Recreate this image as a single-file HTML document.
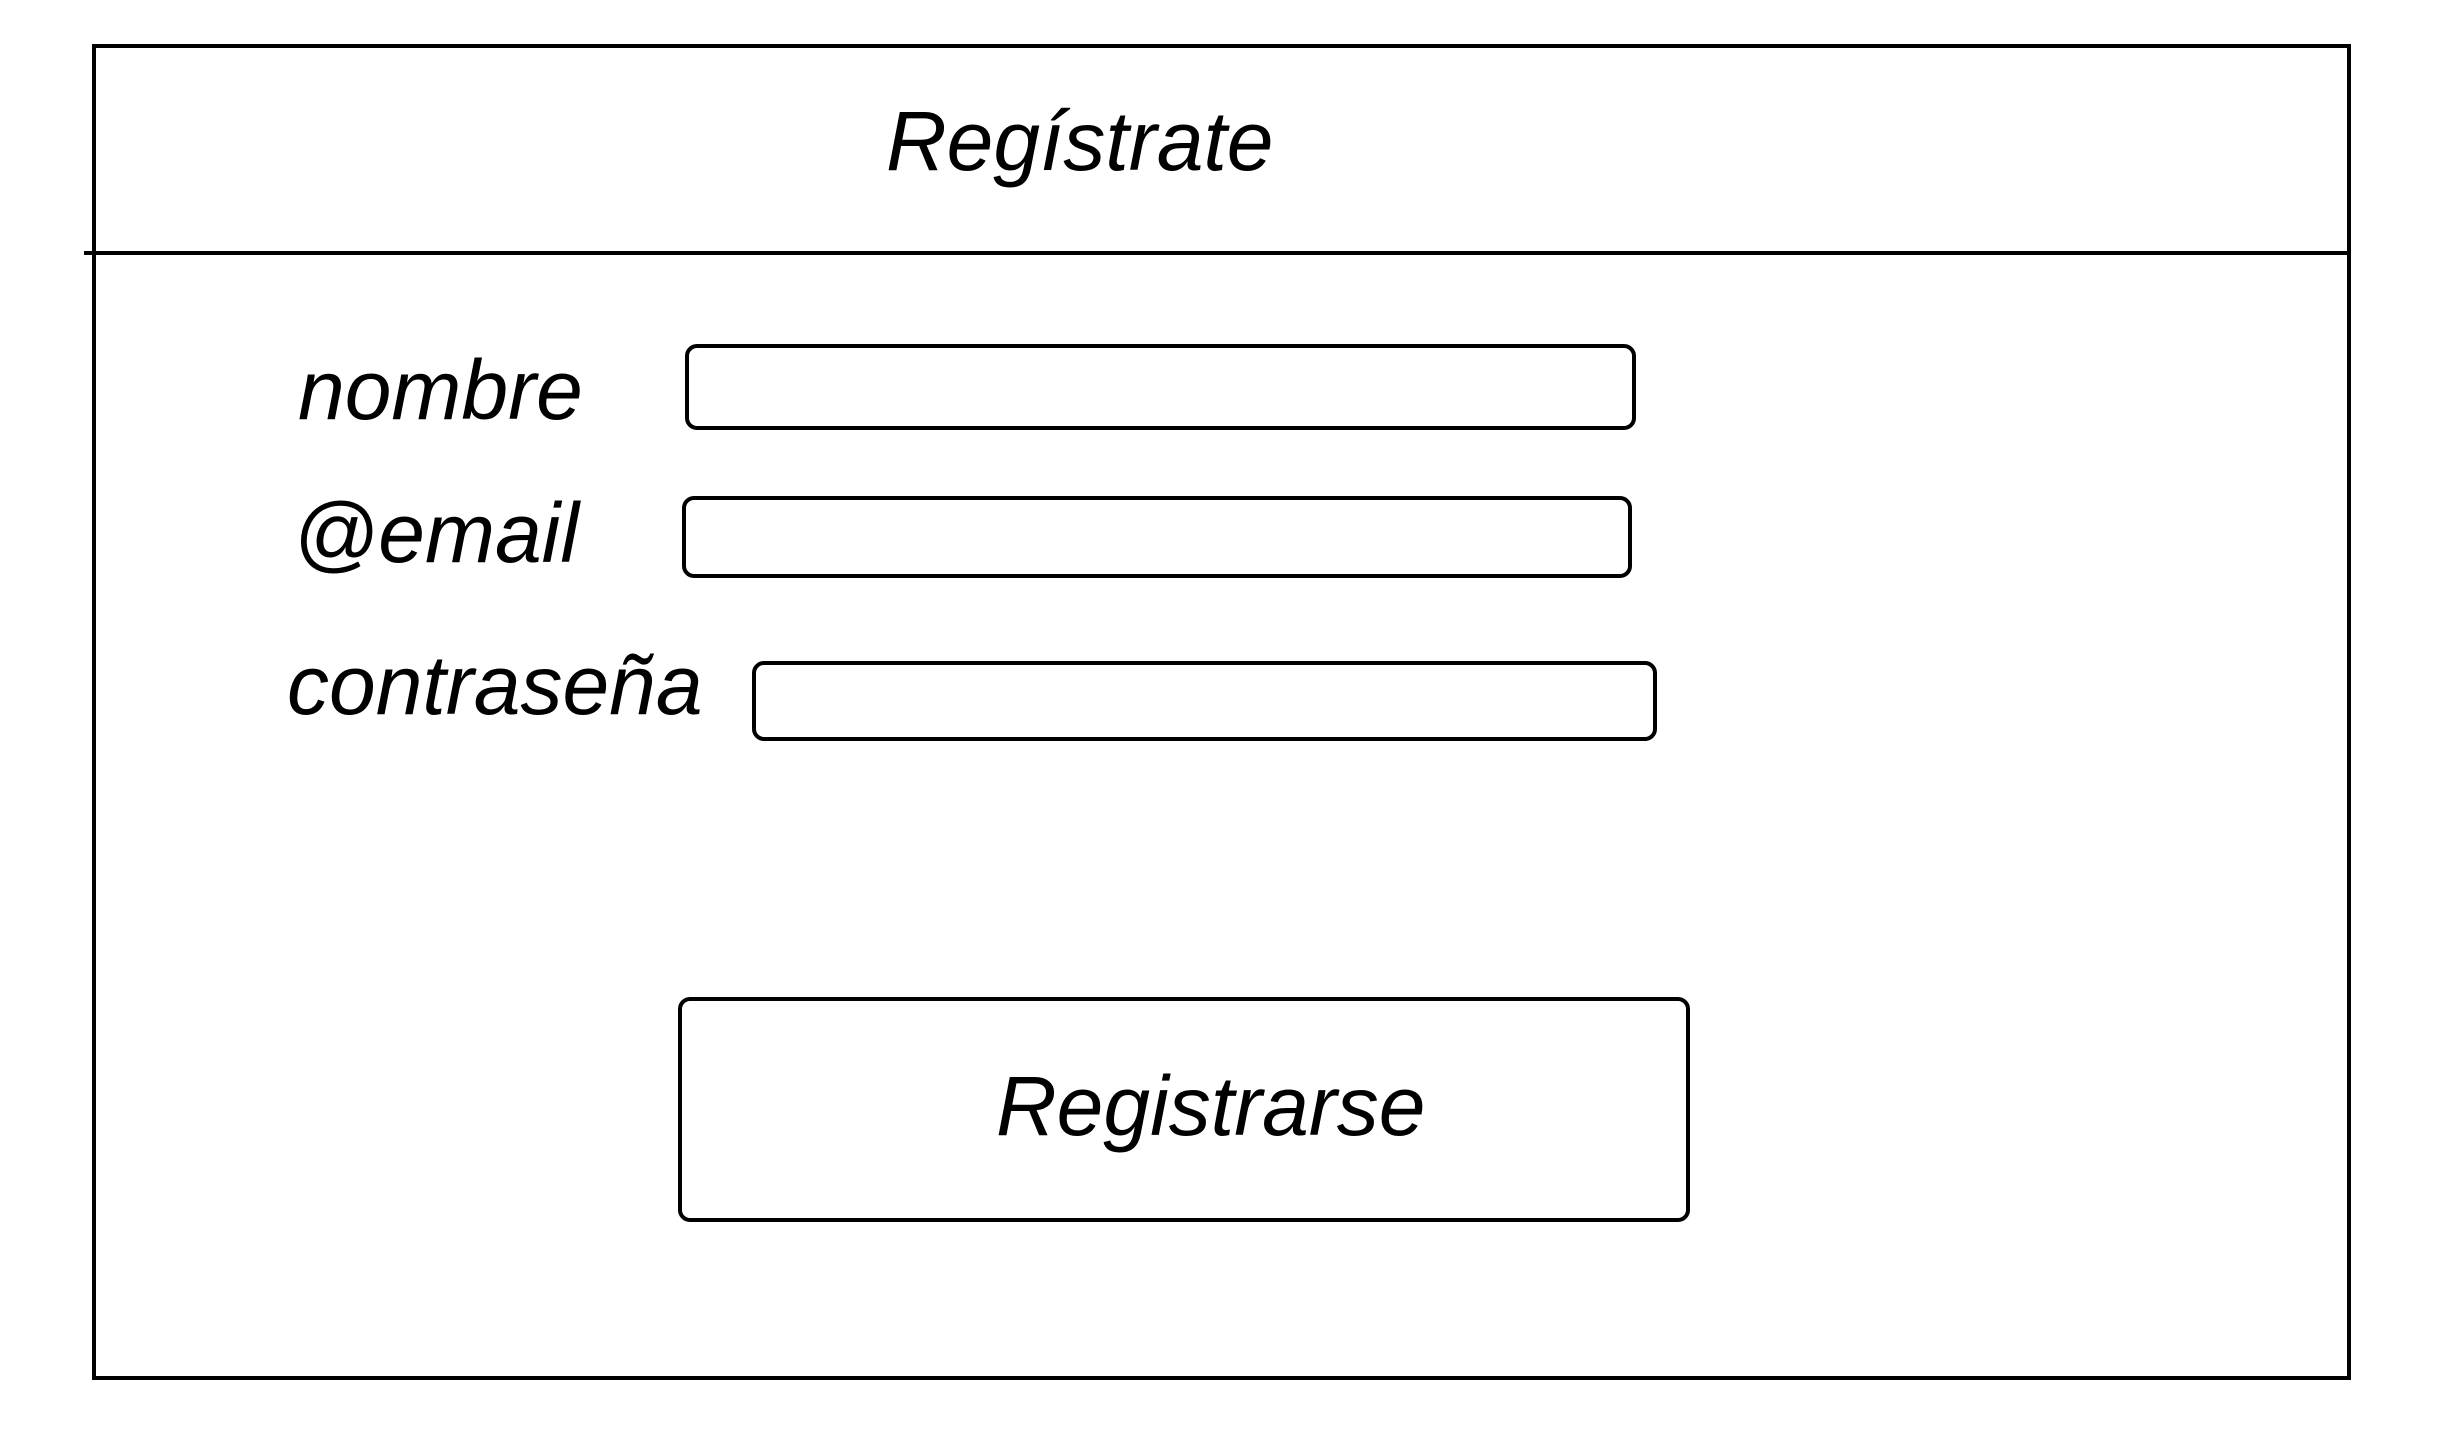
<!DOCTYPE html>
<html><head><meta charset="utf-8"><style>
html,body{margin:0;padding:0;background:#fff;width:2454px;height:1434px;overflow:hidden;position:relative}
.b{position:absolute;box-sizing:border-box;border:4px solid #000}
.r{border-radius:12px}
.t{position:absolute;font-family:"Liberation Sans",sans-serif;font-style:italic;font-size:84px;line-height:1;white-space:nowrap;color:#000}
</style></head><body>
<div class="b" style="left:92px;top:44px;width:2259px;height:1336px"></div>
<div style="position:absolute;left:84px;top:251px;width:2267px;height:4px;background:#000"></div>
<div class="t" style="left:886px;top:99px;">Regístrate</div>
<div class="t" style="left:298px;top:348px;">nombre</div>
<div class="t" style="left:293px;top:491px;">@email</div>
<div class="t" style="left:287px;top:643px;">contraseña</div>
<div class="b r" style="left:685px;top:344px;width:951px;height:86px"></div>
<div class="b r" style="left:682px;top:496px;width:950px;height:82px"></div>
<div class="b r" style="left:752px;top:661px;width:905px;height:80px"></div>
<div class="b r" style="left:678px;top:997px;width:1012px;height:225px"></div>
<div class="t" style="left:996px;top:1064px;">Registrarse</div>
</body></html>
